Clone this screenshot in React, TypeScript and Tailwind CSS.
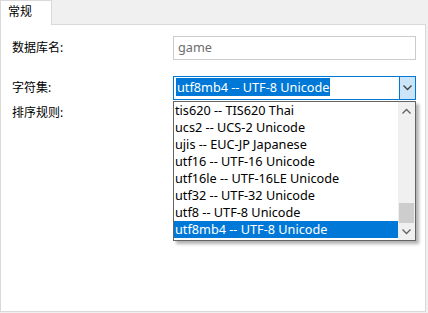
import React from 'react';

const items = [
  'tis620 -- TIS620 Thai',
  'ucs2 -- UCS-2 Unicode',
  'ujis -- EUC-JP Japanese',
  'utf16 -- UTF-16 Unicode',
  'utf16le -- UTF-16LE Unicode',
  'utf32 -- UTF-32 Unicode',
  'utf8 -- UTF-8 Unicode',
  'utf8mb4 -- UTF-8 Unicode',
];

const font = { fontFamily: '"Segoe UI", "Noto Sans", "Noto Sans CJK SC", sans-serif' };

const Chevron: React.FC<{ up?: boolean; className?: string }> = ({ up, className }) => (
  <svg width="9" height="6" viewBox="0 0 9 6" className={className}>
    <path
      d={up ? 'M0.5 5.5 L4.5 1.5 L8.5 5.5' : 'M0.5 0.5 L4.5 4.5 L8.5 0.5'}
      fill="none"
      stroke="currentColor"
      strokeWidth="1.3"
    />
  </svg>
);

const App: React.FC = () => {
  return (
    <div
      className="w-[428px] h-[313px] bg-[#f0f0f0] text-[12px] text-black overflow-hidden"
      style={font}
    >
      {/* Tabs */}
      <div className="flex h-[24px]">
        <div className="relative z-10 w-[52px] h-[25px] bg-white border-t border-l border-r border-[#d9d9d9] pl-[7px] pt-[3px] leading-[16px]">
          常规
        </div>
      </div>

      {/* Panel */}
      <div className="relative w-[426px] h-[288px] bg-white border border-[#d9d9d9] pl-[11px] pt-[11px]">
        <div className="flex items-center h-[24px]">
          <span className="w-[161px]">数据库名:</span>
          <div className="w-[243px] h-[24px] border border-[#cccccc] flex items-center pl-[4px] text-[12.7px] text-[#6d6d6d]">
            game
          </div>
        </div>

        <div className="flex items-center h-[24px] mt-[16px]">
          <span className="w-[161px]">字符集:</span>
          <div className="w-[243px] h-[24px] border border-[#0078d7] flex items-center text-[12.7px]">
            <div className="flex-1 pl-[2px]">
              <span className="bg-[#0078d7] text-white px-[1px] leading-[18px] inline-block">
                utf8mb4 -- UTF-8 Unicode
              </span>
            </div>
            <div className="w-[17px] h-[24px] -mr-px bg-[#cce4f7] border border-[#0078d7] flex items-center justify-center text-[#404040]">
              <Chevron />
            </div>
          </div>
        </div>

        <div className="flex items-center h-[24px] mt-px">
          <span className="w-[161px]">排序规则:</span>
        </div>

        {/* Dropdown list */}
        <div className="absolute left-[172px] top-[76px] w-[243px] h-[140px] bg-white border border-[#646464] flex text-[12.7px] shadow-[3px_3px_3px_rgba(0,0,0,0.3)]">
          <div className="flex-1 flex flex-col">
            {items.map((it, i) => (
              <div
                key={it}
                className={
                  'h-[17px] leading-[17px] pl-[1px] ' +
                  (i === items.length - 1 ? 'bg-[#0078d7] text-white' : '')
                }
              >
                {it}
              </div>
            ))}
          </div>
          <div className="w-[17px] bg-[#f0f0f0] flex flex-col">
            <div className="h-[17px] flex items-center justify-center text-[#606060]">
              <Chevron up />
            </div>
            <div className="flex-1 flex flex-col justify-end">
              <div className="h-[20px] mx-px bg-[#cdcdcd]" />
            </div>
            <div className="h-[17px] flex items-center justify-center text-[#606060]">
              <Chevron />
            </div>
          </div>
        </div>
      </div>
    </div>
  );
};

export default App;
